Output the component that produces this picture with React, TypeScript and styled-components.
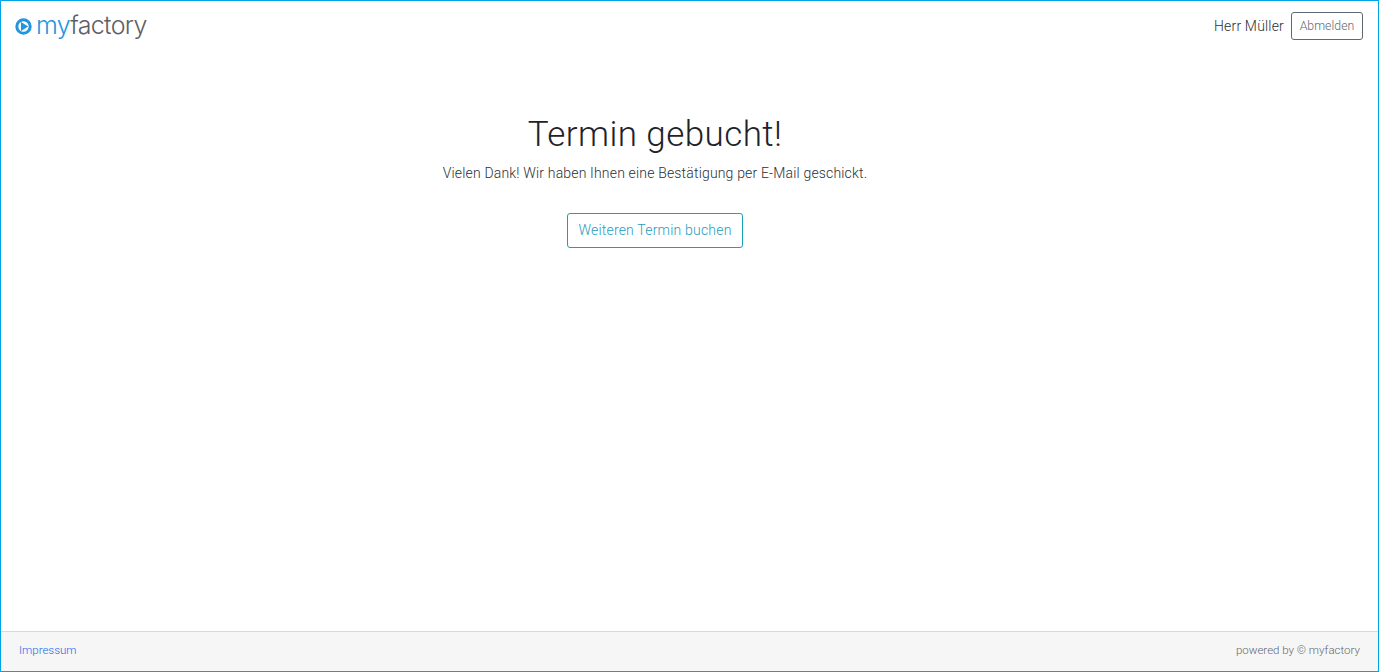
import * as React from "react";
import styled, { createGlobalStyle } from "styled-components";

const GlobalStyle = createGlobalStyle`
    html, body, #root {
        margin: 0;
        height: 100%;
    }
    body {
        font-family: Roboto, "Liberation Sans", sans-serif;
        font-weight: 300;
        background: #fff;
    }
    * { box-sizing: border-box; }
`;

const Page = styled.div`
    height: 672px;
    display: flex;
    flex-direction: column;
    border: 1px solid #00a2e8;
`;

const Header = styled.header`
    height: 53px;
    flex: none;
    display: flex;
    align-items: flex-start;
    justify-content: space-between;
    padding: 10px 15px 0 14px;
`;

const Logo = styled.div`
    display: flex;
    align-items: center;
    gap: 4px;
    height: 30px;
    font-family: Inter, "Liberation Sans", Arial, sans-serif;
    font-size: 25px;
    font-weight: 300;
    letter-spacing: -0.7px;
    color: #5f6063;
`;

const LogoText = styled.span`
    padding-bottom: 2px;
`;

const LogoBlue = styled.span`
    color: #2196e0;
`;

const UserArea = styled.div`
    display: flex;
    align-items: center;
    gap: 7px;
    height: 28px;
    margin-top: 1px;
`;

const UserName = styled.span`
    font-size: 14px;
    letter-spacing: 0.18px;
    color: #2b3036;
`;

const LogoutButton = styled.button`
    height: 28px;
    width: 72px;
    padding: 0;
    background: #fff;
    border: 1px solid #5f6770;
    border-radius: 3px;
    font: inherit;
    font-size: 12.25px;
    letter-spacing: 0.05px;
    color: #5f6770;
`;

const Main = styled.main`
    flex: 1;
    display: flex;
    flex-direction: column;
    align-items: center;
    padding: 60px 69px 0 0;
`;

const Title = styled.h1`
    margin: 0;
    font-size: 35px;
    line-height: 42px;
    font-weight: 300;
    letter-spacing: 0.42px;
    color: #1f2329;
`;

const Message = styled.p`
    margin: 7px 0 0;
    font-size: 14px;
    line-height: 21px;
    letter-spacing: 0.17px;
    color: #2b3036;
`;

const BookButton = styled.button`
    margin-top: 29px;
    height: 35px;
    width: 176px;
    padding: 0 0 2px;
    background: #fff;
    border: 1px solid #17a2b8;
    border-radius: 3px;
    font: inherit;
    font-size: 14px;
    letter-spacing: 0.2px;
    color: #1f9cc0;
`;

const Footer = styled.footer`
    height: 40px;
    flex: none;
    display: flex;
    align-items: center;
    justify-content: space-between;
    padding: 0 18px 4px;
    background: #f6f6f6;
    border-top: 1px solid #d8d8d8;
    font-size: 11.5px;
`;

const FooterLink = styled.a`
    color: #1a66f0;
    text-decoration: none;
`;

const Powered = styled.span`
    color: #5f6770;
`;

const PlayIcon = () => (
    <svg width="17" height="17" viewBox="0 0 17 17" aria-hidden="true">
        <circle cx="8.5" cy="8.5" r="6.7" fill="none" stroke="#2196e0" strokeWidth="3" />
        <path d="M6 3.9 L13.2 8.5 L6 13.1 Z" fill="#2196e0" />
    </svg>
);

export default function App() {
    return (
        <Page>
            <GlobalStyle />
            <Header>
                <Logo>
                    <PlayIcon />
                    <LogoText><LogoBlue>my</LogoBlue>factory</LogoText>
                </Logo>
                <UserArea>
                    <UserName>Herr Müller</UserName>
                    <LogoutButton>Abmelden</LogoutButton>
                </UserArea>
            </Header>
            <Main>
                <Title>Termin gebucht!</Title>
                <Message>Vielen Dank! Wir haben Ihnen eine Bestätigung per E-Mail geschickt.</Message>
                <BookButton>Weiteren Termin buchen</BookButton>
            </Main>
            <Footer>
                <FooterLink href="#">Impressum</FooterLink>
                <Powered>powered by © myfactory</Powered>
            </Footer>
        </Page>
    );
}
